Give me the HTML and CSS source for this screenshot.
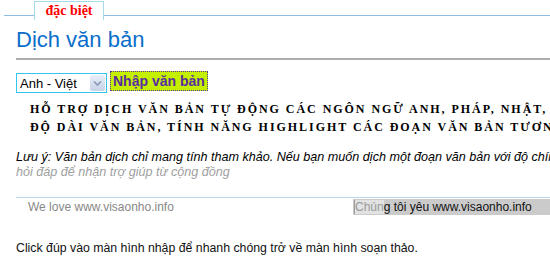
FILE: index.html
```html
<!DOCTYPE html>
<html lang="vi">
<head>
<meta charset="utf-8">
<link rel="stylesheet" href="styles.css">
</head>
<body>
<div class="page">
  <div class="tabs">
    <span class="tab-line tab-line-left"></span>
    <span class="tab">đặc biệt</span>
    <span class="tab-line tab-line-right"></span>
  </div>
  <h1 class="title">Dịch văn bản</h1>
  <div class="controls">
    <div class="select">
      <span class="select-text">Anh - Việt</span>
      <span class="select-btn">
        <svg width="15" height="16" viewBox="0 0 15 16"><path d="M4 6.5 L7.5 10 L11 6.5" fill="none" stroke="#8a9ab8" stroke-width="1.6"/></svg>
      </span>
    </div>
    <span class="btn-input">Nhập văn bản</span>
  </div>
  <div class="intro">
    <div class="intro-line">HỖ TRỢ DỊCH VĂN BẢN TỰ ĐỘNG CÁC NGÔN NGỮ ANH, PHÁP, NHẬT, TRUNG, HÀN...</div>
    <div class="intro-line">ĐỘ DÀI VĂN BẢN, TÍNH NĂNG HIGHLIGHT CÁC ĐOẠN VĂN BẢN TƯƠNG ỨNG</div>
  </div>
  <div class="note">
    <div class="note-line">Lưu ý: Văn bản dịch chỉ mang tính tham khảo. Nếu bạn muốn dịch một đoạn văn bản với độ chính xác cao, hãy gửi lên diễn đàn</div>
    <div class="note-line note-muted">hỏi đáp để nhận trợ giúp từ cộng đồng</div>
  </div>
  <div class="footer-bar">
    <span class="love">We love www.visaonho.info</span>
    <span class="love-vi"><span class="fade">Chún</span>g tôi yêu www.visaonho.info</span>
  </div>
  <p class="hint">Click đúp vào màn hình nhập để nhanh chóng trở về màn hình soạn thảo.</p>
</div>
</body>
</html>
```
FILE: styles.css
```css
html, body {
  margin: 0;
  padding: 0;
  background: #ffffff;
  overflow: hidden;
}
.page {
  width: 550px;
  height: 256px;
  overflow: hidden;
  font-family: "Liberation Sans", Arial, sans-serif;
  white-space: nowrap;
}
.tabs {
  display: flex;
  align-items: flex-start;
  padding: 1px 0 0 4px;
  height: 19px;
}
.tab-line {
  height: 1px;
  background: #8cbde3;
  margin-top: 14px;
}
.tab-line-left { width: 30px; }
.tab-line-right { flex: 1; }
.tab {
  box-sizing: border-box;
  width: 70px;
  height: 19px;
  border: 1px solid #a6dbe9;
  border-bottom: none;
  color: #ff0000;
  font-weight: bold;
  font-size: 14px;
  text-align: center;
  line-height: 17px;
  font-family: "Liberation Serif", serif;
}
.title {
  margin: 7px 0 0 16px;
  font-size: 22px;
  font-weight: normal;
  color: #0a6ecb;
  line-height: 26px;
  padding-bottom: 5px;
  border-bottom: 2px solid #adadad;
}
.controls {
  display: flex;
  align-items: flex-start;
  padding: 11px 0 0 16px;
  gap: 3px;
}
.select {
  box-sizing: border-box;
  width: 91px;
  height: 20px;
  margin-top: 2px;
  border: 1px solid #33c4f2;
  display: flex;
  align-items: center;
  justify-content: space-between;
  padding: 0 1px 0 3px;
  font-size: 13px;
  color: #000;
}
.select-btn {
  width: 15px;
  height: 16px;
  background: linear-gradient(#e8eef8, #c6d2e8);
  border-radius: 2px;
  display: flex;
}
.btn-input {
  box-sizing: border-box;
  height: 20px;
  padding: 0 2px;
  border: 1px dotted #5a2ea0;
  background: #c4f000;
  color: #5a2ea0;
  font-weight: bold;
  font-size: 14px;
  line-height: 18px;
}
.intro {
  padding: 7px 0 0 30px;
  font-family: "Liberation Serif", "Times New Roman", serif;
  font-weight: bold;
  font-size: 12px;
  letter-spacing: 1.95px;
  line-height: 18px;
  color: #000;
}
.note {
  padding: 14px 0 0 16px;
  font-size: 12.6px;
  font-style: italic;
  line-height: 15px;
  color: #000;
}
.note-muted { color: #a0a0a0; }
.footer-bar {
  margin: 17px 0 0 16px;
  border-top: 1px solid #b8d6ee;
  display: flex;
  justify-content: space-between;
  align-items: flex-start;
  font-size: 12px;
  line-height: 14px;
}
.love {
  color: #888888;
  padding: 2px 0 0 12px;
}
.love-vi {
  background: #cbcbcb;
  color: #111;
  padding: 1px 0 1px 1px;
  width: 196px;
  margin-top: 1px;
}
.fade {
  background: #e2e2e2;
  color: #9a9a9a;
  border-left: 1px solid #9a9a9a;
}
.hint {
  margin: 26px 0 0 16px;
  font-size: 12.3px;
  color: #111;
}
```
